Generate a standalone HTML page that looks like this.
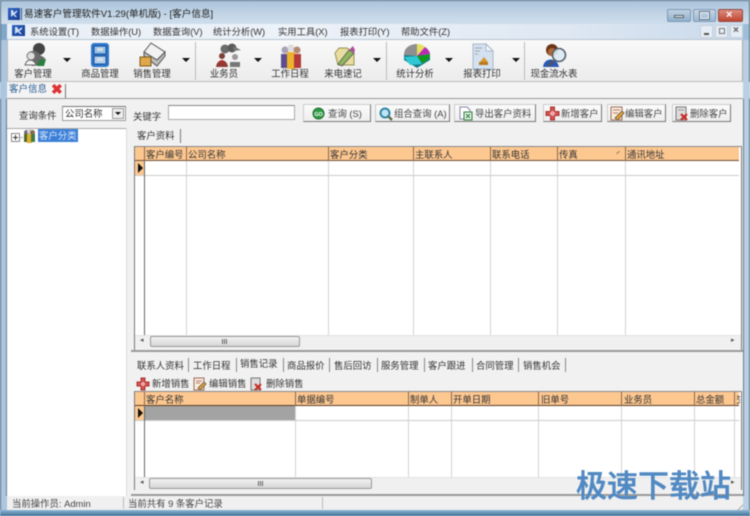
<!DOCTYPE html>
<html><head><meta charset="utf-8"><style>
html,body{margin:0;padding:0}
body{width:750px;height:516px;position:relative;overflow:hidden;background:#f0f0f0;font-family:"Liberation Sans","Noto Sans CJK SC",sans-serif;font-size:9.3px;color:#333}
#r{position:absolute;left:0;top:0;width:750px;height:516px;filter:blur(.45px);overflow:hidden}
.a{position:absolute}
.t{position:absolute;white-space:nowrap;line-height:14px;height:14px}
.tb{font-size:9.4px;text-align:center;color:#333}
.arr{position:absolute;width:0;height:0;border-left:4.5px solid transparent;border-right:4.5px solid transparent;border-top:4px solid #111}
.btn{position:absolute;top:104px;height:16px;background:linear-gradient(#fbfbfb,#eee);border:1px solid #ccc;border-right-color:#777;border-bottom-color:#777;font-size:9.4px;line-height:16px;white-space:nowrap;color:#444}
.hl{position:absolute;background:#ccc;height:1px}
.vl{position:absolute;background:#d2d2d2;width:1px}
.hd{position:absolute;background:#fdc790}
.ht{position:absolute;font-size:9.4px;line-height:13px;white-space:nowrap;color:#333}
.lt{font-size:9.4px}
.sep{position:absolute;width:1px;background:#8a6a4a}
svg{position:absolute;overflow:visible}
</style></head><body><div id="r">
<!-- window frame -->
<div class="a" style="left:0;top:0;width:750px;height:516px;background:linear-gradient(90deg,#7fa6c9,#b4cde2 30%,#c4d6e6 70%,#9dbdd8)"></div>
<div class="a" style="left:0;top:0;width:750px;height:24px;background:linear-gradient(#a9c2da,#c3d5e6 60%,#cfdeec)"></div>
<div class="a" style="left:0;top:0;width:750px;height:1px;background:#4e6b85"></div>
<div class="a" style="left:0;top:0;width:1px;height:516px;background:#4e6b85"></div>
<div class="a" style="left:749px;top:0;width:1px;height:516px;background:#4e6b85"></div>
<div class="a" style="left:0;top:510px;width:750px;height:6px;background:linear-gradient(#8fb6d6,#3a6f93)"></div>
<!-- title -->
<div class="a" style="left:8px;top:8px;width:12px;height:12px;background:linear-gradient(135deg,#2c62c4,#1a3d90)"></div>
<div class="a" style="left:11px;top:10px;width:6px;height:7px;background:#cfe0f5;clip-path:polygon(0 0,30% 0,50% 40%,100% 0,100% 30%,60% 60%,100% 100%,70% 100%,40% 70%,0 100%)"></div>
<div class="a" style="left:21px;top:8px;width:1px;height:12px;background:#3a5a80"></div>
<div class="t" style="left:24px;top:8px;font-size:9.600px;color:#222">易速客户管理软件V1.29(单机版) - [客户信息]</div>
<!-- caption buttons -->
<div class="a" style="left:667px;top:9px;width:24px;height:13px;background:linear-gradient(#c2d2e2,#8fb0cd);border:1px solid #7d99b5;box-sizing:border-box;border-radius:2px"></div>
<div class="a" style="left:674px;top:15px;width:10px;height:3px;background:#eef4fa;border:1px solid #566;box-sizing:border-box"></div>
<div class="a" style="left:693px;top:9px;width:23px;height:13px;background:linear-gradient(#c8d7e6,#9ab7d1);border:1px solid #7d99b5;box-sizing:border-box;border-radius:2px"></div>
<div class="a" style="left:700px;top:12px;width:9px;height:7px;border:1.500px solid #eef4fa;box-sizing:border-box;outline:1px solid #5f7385"></div>
<div class="a" style="left:718px;top:9px;width:25px;height:13px;background:linear-gradient(#dc8d80,#c0452f);border:1px solid #8d4a42;box-sizing:border-box;border-radius:2px"></div>
<div class="t" style="left:726px;top:8px;color:#fff;font-weight:bold;font-size:11px">×</div>
<!-- menu bar -->
<div class="a" style="left:7px;top:24px;width:736px;height:16px;background:linear-gradient(90deg,#e9f0f8,#edf2f9 40%,#dfe8f3 75%,#c9d9ea)"></div>
<div class="a" style="left:7px;top:39px;width:736px;height:1px;background:#b8c3cf"></div>
<div class="a" style="left:12px;top:25px;width:13px;height:11px;background:linear-gradient(135deg,#2c62c4,#1a3d90)"></div>
<div class="a" style="left:15px;top:27px;width:7px;height:7px;background:#cfe0f5;clip-path:polygon(0 0,30% 0,50% 40%,100% 0,100% 30%,60% 60%,100% 100%,70% 100%,40% 70%,0 100%)"></div>
<div class="t" style="left:30px;top:25px">系统设置(T)</div>
<div class="t" style="left:91px;top:25px">数据操作(U)</div>
<div class="t" style="left:153px;top:25px">数据查询(V)</div>
<div class="t" style="left:213px;top:25px">统计分析(W)</div>
<div class="t" style="left:278px;top:25px">实用工具(X)</div>
<div class="t" style="left:340px;top:25px">报表打印(Y)</div>
<div class="t" style="left:401px;top:25px">帮助文件(Z)</div>
<div class="a" style="left:700px;top:25px;width:13px;height:13px;background:#e6edf5;border:1px solid #c5d0dc;box-sizing:border-box"></div>
<div class="a" style="left:704px;top:33px;width:5px;height:1.500px;background:#555"></div>
<div class="a" style="left:715px;top:25px;width:13px;height:13px;background:#e6edf5;border:1px solid #c5d0dc;box-sizing:border-box"></div>
<div class="a" style="left:719px;top:28px;width:6px;height:6px;border:1px solid #777;box-sizing:border-box"></div>
<div class="a" style="left:730px;top:25px;width:13px;height:13px;background:#e6edf5;border:1px solid #c5d0dc;box-sizing:border-box"></div>
<div class="t" style="left:733px;top:24px;font-weight:bold;color:#555;font-size:10px">×</div>
<!-- toolbar -->
<div class="a" style="left:7px;top:40px;width:736px;height:41px;background:linear-gradient(#f9f9f9,#ececec)"></div>
<div class="a" style="left:7px;top:81px;width:736px;height:1px;background:#bcbcbc"></div>
<div class="a" style="left:7px;top:40px;width:1px;height:41px;background:#bbb"></div>
<div class="a" style="left:742px;top:40px;width:1px;height:41px;background:#aaa"></div>
<div class="vl" style="left:195px;top:42px;height:38px;background:#bbb"></div>
<div class="vl" style="left:386px;top:42px;height:38px;background:#bbb"></div>
<div class="vl" style="left:524px;top:42px;height:38px;background:#bbb"></div>
<!-- toolbar icons -->
<svg style="left:22px;top:43px" width="26" height="24"><circle cx="17" cy="6" r="6" fill="#444"/><path d="M6 10C10 6 16 8 18 12L23 15 20 22 10 23Z" fill="#6a6a6a"/><circle cx="9" cy="13" r="4" fill="#ddd" stroke="#777"/><path d="M3 22C5 15 12 16 14 22Z" fill="#f4f4f4" stroke="#666"/><path d="M17 17L24 16 22 23 15 23Z" fill="#2a7d3c"/></svg>
<svg style="left:91px;top:43px" width="18" height="24"><rect x="0" y="0" width="18" height="24" rx="3" fill="#2f78cc"/><rect x="3" y="3" width="12" height="8" fill="#8fc0ee" stroke="#1b4f92"/><rect x="3" y="13" width="12" height="8" fill="#a9d0f2" stroke="#1b4f92"/><rect x="6" y="5" width="6" height="3" fill="#ddd"/><rect x="6" y="15" width="6" height="3" fill="#ddd"/></svg>
<svg style="left:140px;top:43px" width="26" height="24"><path d="M4 9L11 0 25 9 17 17Z" fill="#f2f2f2" stroke="#555"/><path d="M4 9L4 13 17 23 25 13 25 9 17 17Z" fill="#bcbcbc" stroke="#555"/><rect x="0" y="14" width="11" height="9" fill="#e0a84a" stroke="#7a5a1a"/></svg>
<svg style="left:216px;top:43px" width="26" height="26"><circle cx="9" cy="6" r="4.500" fill="#6b6b6b"/><circle cx="16" cy="5" r="4.500" fill="#5a5a5a"/><path d="M17 3L25 7 18 8Z" fill="#777"/><circle cx="6" cy="13" r="3" fill="#7a3f36"/><path d="M0 24C1 15 11 15 12 24Z" fill="#8f3b35"/><path d="M5 17L7 17 6 22Z" fill="#d22"/><circle cx="19" cy="14" r="3" fill="#999"/><path d="M14 24V19H24V24Z" fill="#777"/></svg>
<svg style="left:280px;top:42px" width="22" height="28"><circle cx="5" cy="8" r="3.500" fill="#a9a2b6"/><circle cx="11" cy="6" r="3.500" fill="#ddd"/><circle cx="17" cy="8" r="3.500" fill="#b58a75"/><path d="M1 12H8V26H1Z" fill="#5d4d8c"/><path d="M7 10H15V27H7Z" fill="#eeb32d"/><path d="M14 12H21V26H14Z" fill="#b23a3a"/></svg>
<svg style="left:334px;top:45px" width="22" height="22"><path d="M1 8L5 3H13L20 8V20H4Z" fill="#e8dca0" stroke="#97914f"/><path d="M4 19L15 5 20 8 8 21Z" fill="#8db85a" stroke="#666"/><path d="M15 5L19 1 21 5 20 8Z" fill="#b0509a"/></svg>
<svg style="left:402px;top:42px" width="30" height="27"><path d="M2 18V13H28V18L15 26Z" fill="#177e8c"/><path d="M2 13C2 5 9 2 15 2L15 14Z" fill="#8f8f8f"/><path d="M15 2C18 2 21 3 23 5L15 14Z" fill="#e6e060"/><path d="M23 5C26 7 28 10 28 12L15 14Z" fill="#b92db0"/><path d="M28 12C28 17 24 20 20 21L15 14Z" fill="#109a20"/><path d="M15 14L20 22 8 23 2 15Z" fill="#2dc8d4"/></svg>
<svg style="left:472px;top:43px" width="22" height="27"><path d="M1 1H14L21 8V26H1Z" fill="#d4e1f0" stroke="#a9b8ca"/><path d="M14 1V8H21Z" fill="#f4f7fb" stroke="#a9b8ca"/><path d="M3 5H10M3 8H8M3 11H6" stroke="#9aa" fill="none"/><path d="M8 19H16L12 14Z" fill="#d9952e"/><rect x="7" y="19" width="9" height="3" fill="#b87a1f"/></svg>
<svg style="left:541px;top:43px" width="28" height="26"><circle cx="11" cy="7" r="6" fill="#6b3416"/><circle cx="11" cy="9" r="4" fill="#b06a38"/><path d="M2 24C3 14 16 14 18 24Z" fill="#2d58b4"/><circle cx="18" cy="12" r="6.500" fill="#dbe9f4" fill-opacity=".9" stroke="#55606b" stroke-width="1.600"/><path d="M12 18L8 23" stroke="#555" stroke-width="2.500"/></svg>
<!-- toolbar text -->
<div class="t tb" style="left:8px;top:67px;width:50px">客户管理</div>
<div class="t tb" style="left:75px;top:67px;width:50px">商品管理</div>
<div class="t tb" style="left:127px;top:67px;width:50px">销售管理</div>
<div class="t tb" style="left:199px;top:67px;width:50px">业务员</div>
<div class="t tb" style="left:265px;top:67px;width:50px">工作日程</div>
<div class="t tb" style="left:318px;top:67px;width:50px">来电速记</div>
<div class="t tb" style="left:390px;top:67px;width:50px">统计分析</div>
<div class="t tb" style="left:457px;top:67px;width:50px">报表打印</div>
<div class="t tb" style="left:524px;top:67px;width:60px">现金流水表</div>
<div class="arr" style="left:63px;top:58px"></div>
<div class="arr" style="left:182px;top:58px"></div>
<div class="arr" style="left:254px;top:58px"></div>
<div class="arr" style="left:373px;top:58px"></div>
<div class="arr" style="left:445px;top:58px"></div>
<div class="arr" style="left:512px;top:58px"></div>
<!-- tab strip -->
<div class="a" style="left:0;top:82px;width:750px;height:16px;background:#f4f4f4"></div>
<div class="a" style="left:0;top:82px;width:7px;height:16px;background:#a9c4dc"></div>
<div class="a" style="left:743px;top:82px;width:7px;height:16px;background:#b4cde2"></div>
<div class="t" style="left:9px;top:83px;color:#2a5d96;font-size:9.500px">客户信息</div>
<div class="t" style="left:51px;top:82px;color:#d33;font-weight:bold;font-size:14px">✖</div>
<div class="a" style="left:65px;top:84px;width:1px;height:14px;background:#777"></div>
<div class="a" style="left:0;top:98px;width:750px;height:1px;background:#999"></div>
<!-- main bg -->
<div class="a" style="left:7px;top:99px;width:736px;height:397px;background:#f1f1f1"></div>
<!-- query row -->
<div class="t lt" style="left:19px;top:109px">查询条件</div>
<div class="a" style="left:62px;top:106px;width:64px;height:15px;background:#fff;border:1px solid #9a9a9a;border-top-color:#777;box-sizing:border-box"></div>
<div class="t lt" style="left:65px;top:107px">公司名称</div>
<div class="a" style="left:112px;top:108px;width:12px;height:11px;background:#eee;border:1px solid #999;box-sizing:border-box"></div>
<div class="a" style="left:115px;top:112px;border-left:3px solid transparent;border-right:3px solid transparent;border-top:3px solid #111"></div>
<div class="t lt" style="left:133px;top:110px">关键字</div>
<div class="a" style="left:168px;top:105px;width:127px;height:15px;background:#fff;border:1px solid #aaa;border-top-color:#888;box-sizing:border-box"></div>
<div class="btn" style="left:303px;width:66px"><span style="position:absolute;left:24px;top:1px">查询 (S)</span></div>
<svg style="left:312px;top:107px" width="13" height="13"><circle cx="6.500" cy="6.500" r="5.500" fill="#2f9a44" stroke="#1f6d30"/><text x="2.200" y="9" font-size="5.500" fill="#fff" font-family="Liberation Sans" font-weight="bold">GO</text></svg>
<div class="btn" style="left:375px;width:73px"><span style="position:absolute;left:18px;top:1px">组合查询 (A)</span></div>
<svg style="left:378px;top:106px" width="15" height="15"><circle cx="7" cy="7" r="4.500" fill="#bfe6f2" stroke="#2d86a8" stroke-width="2"/><path d="M10 10L14 14" stroke="#5b6b4c" stroke-width="2.400"/></svg>
<div class="btn" style="left:454px;width:80px"><span style="position:absolute;left:20px;top:1px">导出客户资料</span></div>
<svg style="left:459px;top:106px" width="14" height="15"><path d="M1 1H8L11 4V13H1Z" fill="#fff" stroke="#88a"/><rect x="5" y="6" width="8" height="8" fill="#e6f2e4" stroke="#2c7d3f"/><path d="M7 8L11 12M11 8L7 12" stroke="#2c7d3f"/></svg>
<div class="btn" style="left:543px;width:57px"><span style="position:absolute;left:17px;top:1px">新增客户</span></div>
<svg style="left:546px;top:107px" width="13" height="13"><path d="M4.500 0H8.500V4.500H13V8.500H8.500V13H4.500V8.500H0V4.500H4.500Z" fill="#d4524f" stroke="#a33"/><circle cx="6.500" cy="6.500" r="2.500" fill="#eaa"/></svg>
<div class="btn" style="left:607px;width:57px"><span style="position:absolute;left:17px;top:1px">编辑客户</span></div>
<svg style="left:610px;top:106px" width="14" height="15"><rect x="1" y="1" width="11" height="13" fill="#f8eedc" stroke="#9a6a5a"/><path d="M3 4H10M3 7H8" stroke="#b77"/><path d="M5 12L12 5 14 7 8 14Z" fill="#d9a72e" stroke="#865"/></svg>
<div class="btn" style="left:672px;width:57px"><span style="position:absolute;left:17px;top:1px">删除客户</span></div>
<svg style="left:675px;top:106px" width="15" height="15"><path d="M1 1H11V14H1Z" fill="#dcdcdc" stroke="#777"/><path d="M3 4H9" stroke="#999"/><path d="M6 8L12 14M12 8L6 14" stroke="#c62a22" stroke-width="2.200"/></svg>
<!-- left tree -->
<div class="a" style="left:7px;top:128px;width:119px;height:368px;background:#fff"></div>
<div class="a" style="left:7px;top:128px;width:119px;height:1px;background:#a8a8a8"></div>
<div class="a" style="left:126px;top:128px;width:1px;height:368px;background:#ddd"></div>
<div class="a" style="left:11px;top:133px;width:7px;height:7px;border:1px solid #888;background:#fff"></div>
<div class="a" style="left:13px;top:137px;width:5px;height:1px;background:#333"></div>
<div class="a" style="left:15px;top:135px;width:1px;height:5px;background:#333"></div>
<div class="a" style="left:20px;top:137px;width:3px;height:1px;background:#aaa"></div>
<svg style="left:23px;top:129px" width="13" height="14"><circle cx="3.500" cy="3.500" r="2.500" fill="#6a6a78"/><circle cx="6.500" cy="2.500" r="2.500" fill="#d6d6d6"/><circle cx="9.500" cy="3.500" r="2.500" fill="#8a6a55"/><rect x="1" y="5" width="4" height="8" fill="#4d6a2e"/><rect x="4" y="5" width="5" height="9" fill="#e3ae2b"/><rect x="8" y="5" width="4" height="8" fill="#3e7a4a"/></svg>
<div class="a" style="left:38px;top:129px;width:40px;height:13px;background:#3c7fd8"></div>
<div class="t lt" style="left:39px;top:129px;color:#d9e8fa">客户分类</div>
<!-- right tab: 客户资料 -->
<div class="t lt" style="left:137px;top:129px">客户资料</div>
<div class="a" style="left:180px;top:129px;width:1px;height:14px;background:#777"></div>
<!-- grid 1 -->
<div class="a" style="left:134px;top:146px;width:608px;height:190px;background:#fff"></div>
<div class="a" style="left:134px;top:146px;width:608px;height:1px;background:#888"></div>
<div class="a" style="left:134px;top:146px;width:1px;height:204px;background:#777"></div>
<div class="a" style="left:741px;top:146px;width:1px;height:204px;background:#777"></div>
<div class="hd" style="left:135px;top:147px;width:604px;height:13px"></div>
<div class="a" style="left:135px;top:160px;width:604px;height:1px;background:#6e5138"></div>
<div class="hd" style="left:135px;top:161px;width:10px;height:14px"></div>
<div class="a" style="left:138px;top:163px;border-top:5px solid transparent;border-bottom:5px solid transparent;border-left:5px solid #111"></div>
<div class="hl" style="left:135px;top:175px;width:604px"></div>
<div class="sep" style="left:144px;top:147px;height:14px"></div>
<div class="vl" style="left:144px;top:161px;height:174px;background:#666"></div>
<div class="sep" style="left:186px;top:147px;height:14px"></div><div class="vl" style="left:186px;top:161px;height:174px"></div>
<div class="sep" style="left:328px;top:147px;height:14px"></div><div class="vl" style="left:328px;top:161px;height:174px"></div>
<div class="sep" style="left:413px;top:147px;height:14px"></div><div class="vl" style="left:413px;top:161px;height:174px"></div>
<div class="sep" style="left:490px;top:147px;height:14px"></div><div class="vl" style="left:490px;top:161px;height:174px"></div>
<div class="sep" style="left:557px;top:147px;height:14px"></div><div class="vl" style="left:557px;top:161px;height:174px"></div>
<div class="sep" style="left:625px;top:147px;height:14px"></div><div class="vl" style="left:625px;top:161px;height:174px"></div>
<div class="ht" style="left:146px;top:148px">客户编号</div>
<div class="ht" style="left:188px;top:148px">公司名称</div>
<div class="ht" style="left:330px;top:148px">客户分类</div>
<div class="ht" style="left:415px;top:148px">主联系人</div>
<div class="ht" style="left:492px;top:148px">联系电话</div>
<div class="ht" style="left:559px;top:148px">传真</div>
<div class="ht" style="left:627px;top:148px">通讯地址</div>
<div class="a" style="left:616px;top:152px;width:4px;height:1px;background:#9a7a5a;transform:rotate(-45deg)"></div>
<!-- scrollbar 1 -->
<div class="a" style="left:135px;top:335px;width:606px;height:13px;background:#f0f0f0;border-top:1px solid #e2e2e2;box-sizing:border-box"></div>
<div class="t" style="left:140px;top:334px;font-size:7px;color:#555">◂</div>
<div class="a" style="left:150px;top:336px;width:150px;height:11px;background:linear-gradient(#f2f2f2,#d6d6d6);border:1px solid #999;border-radius:2px;box-sizing:border-box"></div>
<div class="a" style="left:222px;top:339px;width:5px;height:5px;background:repeating-linear-gradient(90deg,#666 0 1px,transparent 1px 2px)"></div>
<div class="t" style="left:731px;top:334px;font-size:7px;color:#555">▸</div>
<div class="a" style="left:131px;top:350px;width:612px;height:2px;background:#9a9a9a"></div>
<!-- lower tabs -->
<div class="t lt" style="left:137px;top:359px">联系人资料</div>
<div class="a" style="left:188px;top:358px;width:1px;height:14px;background:#888"></div>
<div class="t lt" style="left:193px;top:359px">工作日程</div>
<div class="a" style="left:236px;top:358px;width:1px;height:14px;background:#888"></div>
<div class="t lt" style="left:240px;top:357px">销售记录</div>
<div class="a" style="left:283px;top:358px;width:1px;height:14px;background:#888"></div>
<div class="t lt" style="left:287px;top:359px">商品报价</div>
<div class="a" style="left:329px;top:358px;width:1px;height:14px;background:#888"></div>
<div class="t lt" style="left:334px;top:359px">售后回访</div>
<div class="a" style="left:377px;top:358px;width:1px;height:14px;background:#888"></div>
<div class="t lt" style="left:381px;top:359px">服务管理</div>
<div class="a" style="left:424px;top:358px;width:1px;height:14px;background:#888"></div>
<div class="t lt" style="left:428px;top:359px">客户跟进</div>
<div class="a" style="left:472px;top:358px;width:1px;height:14px;background:#888"></div>
<div class="t lt" style="left:476px;top:359px">合同管理</div>
<div class="a" style="left:518px;top:358px;width:1px;height:14px;background:#888"></div>
<div class="t lt" style="left:523px;top:359px">销售机会</div>
<div class="a" style="left:565px;top:358px;width:1px;height:14px;background:#888"></div>
<!-- lower actions -->
<svg style="left:137px;top:378px" width="12" height="12"><path d="M4 0H8V4H12V8H8V12H4V8H0V4H4Z" fill="#d4524f" stroke="#a33"/><circle cx="6" cy="6" r="2" fill="#eaa"/></svg>
<div class="t lt" style="left:152px;top:377px">新增销售</div>
<svg style="left:193px;top:377px" width="13" height="14"><rect x="1" y="1" width="10" height="12" fill="#f8eedc" stroke="#9a6a5a"/><path d="M3 4H9M3 6H7" stroke="#b77"/><path d="M5 11L11 5 13 7 7 13Z" fill="#d9a72e" stroke="#865"/></svg>
<div class="t lt" style="left:209px;top:377px">编辑销售</div>
<svg style="left:250px;top:377px" width="14" height="14"><path d="M1 1H10V13H1Z" fill="#dcdcdc" stroke="#777"/><path d="M5 7L11 13M11 7L5 13" stroke="#c62a22" stroke-width="2"/></svg>
<div class="t lt" style="left:266px;top:377px">删除销售</div>
<!-- grid 2 -->
<div class="a" style="left:134px;top:391px;width:608px;height:87px;background:#fff"></div>
<div class="a" style="left:134px;top:391px;width:1px;height:99px;background:#777"></div>
<div class="a" style="left:741px;top:391px;width:1px;height:99px;background:#777"></div>
<div class="a" style="left:134px;top:391px;width:608px;height:1px;background:#888"></div>
<div class="hd" style="left:135px;top:392px;width:604px;height:13px"></div>
<div class="a" style="left:135px;top:405px;width:604px;height:1px;background:#5b3d24"></div>
<div class="hd" style="left:135px;top:406px;width:10px;height:14px"></div>
<div class="a" style="left:138px;top:408px;border-top:5px solid transparent;border-bottom:5px solid transparent;border-left:5px solid #111"></div>
<div class="a" style="left:145px;top:406px;width:150px;height:14px;background:#a3a3a3"></div>
<div class="hl" style="left:135px;top:420px;width:604px"></div>
<div class="sep" style="left:144px;top:392px;height:14px"></div><div class="vl" style="left:144px;top:406px;height:71px;background:#666"></div>
<div class="sep" style="left:295px;top:392px;height:14px"></div><div class="vl" style="left:295px;top:406px;height:71px"></div>
<div class="sep" style="left:408px;top:392px;height:14px"></div><div class="vl" style="left:408px;top:406px;height:71px"></div>
<div class="sep" style="left:451px;top:392px;height:14px"></div><div class="vl" style="left:451px;top:406px;height:71px"></div>
<div class="sep" style="left:538px;top:392px;height:14px"></div><div class="vl" style="left:538px;top:406px;height:71px"></div>
<div class="sep" style="left:621px;top:392px;height:14px"></div><div class="vl" style="left:621px;top:406px;height:71px"></div>
<div class="sep" style="left:694px;top:392px;height:14px"></div><div class="vl" style="left:694px;top:406px;height:71px"></div>
<div class="sep" style="left:734px;top:392px;height:14px"></div><div class="vl" style="left:734px;top:406px;height:71px"></div>
<div class="ht" style="left:146px;top:393px">客户名称</div>
<div class="ht" style="left:297px;top:393px">单据编号</div>
<div class="ht" style="left:410px;top:393px">制单人</div>
<div class="ht" style="left:453px;top:393px">开单日期</div>
<div class="ht" style="left:541px;top:393px">旧单号</div>
<div class="ht" style="left:624px;top:393px">业务员</div>
<div class="ht" style="left:696px;top:393px">总金额</div>
<div class="ht" style="left:736px;top:393px;width:4px;overflow:hidden">交</div>
<!-- scrollbar 2 -->
<div class="a" style="left:135px;top:477px;width:606px;height:13px;background:#f0f0f0;border-top:1px solid #e2e2e2;box-sizing:border-box"></div>
<div class="t" style="left:140px;top:476px;font-size:7px;color:#555">◂</div>
<div class="a" style="left:149px;top:478px;width:223px;height:11px;background:linear-gradient(#f2f2f2,#d6d6d6);border:1px solid #999;border-radius:2px;box-sizing:border-box"></div>
<div class="a" style="left:258px;top:481px;width:5px;height:5px;background:repeating-linear-gradient(90deg,#666 0 1px,transparent 1px 2px)"></div>
<div class="t" style="left:731px;top:476px;font-size:7px;color:#555">▸</div>
<div class="a" style="left:131px;top:494px;width:612px;height:2px;background:#9a9a9a"></div>
<!-- status bar -->
<div class="a" style="left:7px;top:496px;width:736px;height:14px;background:#f0f0f0"></div>
<div class="vl" style="left:123px;top:497px;height:12px;background:#bbb"></div>
<div class="vl" style="left:322px;top:497px;height:12px;background:#bbb"></div>
<div class="t lt" style="left:12px;top:497px;color:#444">当前操作员: Admin</div>
<div class="t lt" style="left:128px;top:497px;color:#444">当前共有 9 条客户记录</div>
<div class="a" style="left:736px;top:503px;width:7px;height:7px;background:repeating-linear-gradient(135deg,#aaa 0 1px,transparent 1px 3px);clip-path:polygon(100% 0,100% 100%,0 100%)"></div>
<!-- side frame strips -->
<div class="a" style="left:1px;top:40px;width:6px;height:470px;background:#abc6de"></div>
<div class="a" style="left:743px;top:40px;width:6px;height:470px;background:#b9d0e4"></div>
<div class="a" style="left:6px;top:99px;width:1px;height:397px;background:#6f7a85"></div>
<div class="a" style="left:743px;top:99px;width:1px;height:397px;background:#6f7a85"></div>
<!-- watermark -->
<div class="t" style="left:576px;top:469px;height:36px;line-height:36px;font-size:31px;font-weight:500;color:#5189c2;-webkit-text-stroke:.5px #5189c2">极速下载站</div>
</div></body></html>
